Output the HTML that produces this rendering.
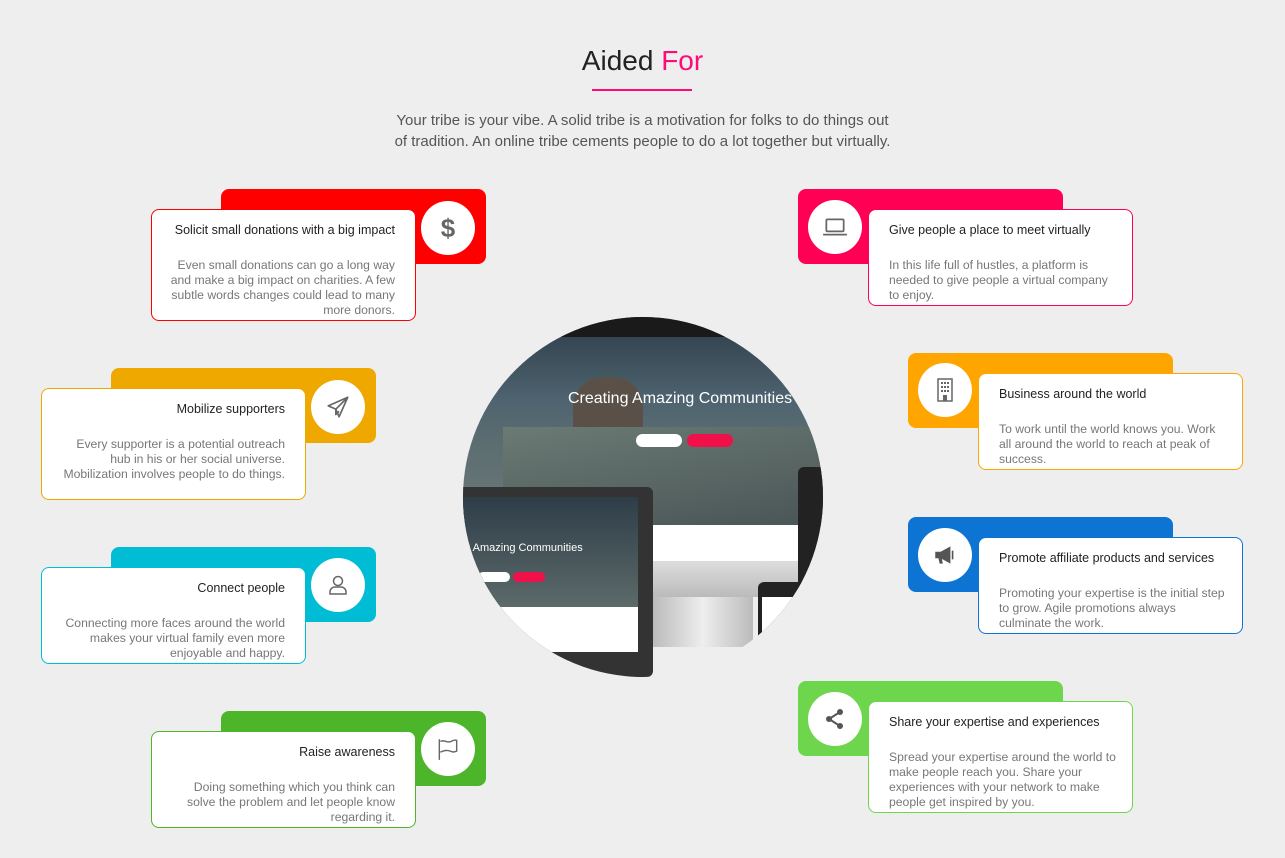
<!DOCTYPE html>
<html><head><meta charset="utf-8"><style>
body{margin:0;width:1285px;height:858px;background:#eeeeee;font-family:"Liberation Sans",Arial,sans-serif;position:relative;overflow:hidden}
.abs{position:absolute}
.bg{position:absolute;width:265px;height:75px;border-radius:8px}
.card{position:absolute;width:265px;background:#fff;border:1px solid;border-radius:8px;box-sizing:border-box;font-size:12.2px}
.card.l{padding:13px 20px 10px 12px;text-align:right}
.card.r{padding:13px 12px 10px 20px}
.card h4{margin:0 0 20px;font-weight:normal;color:#222;font-size:12.5px;line-height:15px}
.card p{margin:0;color:#777;line-height:15px}
.ic{position:absolute;width:54px;height:54px;border-radius:50%;background:#fff;display:flex;align-items:center;justify-content:center}
</style></head><body>
<div class="abs" style="left:0;width:1285px;top:45px;text-align:center;font-size:28px;color:#222">Aided <span style="color:#ff0a78">For</span></div>
<div class="abs" style="left:592px;top:89px;width:100px;height:2px;background:#ff0a78"></div>
<div class="abs" style="left:0;width:1285px;top:110px;text-align:center;font-size:15px;line-height:21px;color:#555">Your tribe is your vibe. A solid tribe is a motivation for folks to do things out<br>of tradition. An online tribe cements people to do a lot together but virtually.</div>

<div class="abs" style="left:463px;top:317px;width:360px;height:360px;border-radius:50%;overflow:hidden;background:#eee">
 <div class="abs" style="left:0;top:0;width:360px;height:210px;background:linear-gradient(180deg,#2d3c48 0%,#4e6470 40%,#5c6d70 60%,#6d7a7a 100%)"></div>
 <div class="abs" style="left:20px;top:0;width:340px;height:20px;background:#1a1a1a"></div>
 <div class="abs" style="left:110px;top:60px;width:70px;height:50px;background:#5a5048;border-radius:30px 30px 0 0"></div>
 <div class="abs" style="left:40px;top:110px;width:320px;height:100px;background:linear-gradient(170deg,#6a7a74,#4a5556)"></div>
 <div class="abs" style="left:105px;top:73px;color:#fff;font-size:16px;white-space:nowrap">Creating Amazing Communities</div>
 <div class="abs" style="left:173px;top:117px;width:46px;height:13px;border-radius:7px;background:#fff"></div>
 <div class="abs" style="left:224px;top:117px;width:46px;height:13px;border-radius:7px;background:#f0104a"></div>
 <div class="abs" style="left:180px;top:208px;width:170px;height:36px;background:#fff"></div>
 <div class="abs" style="left:180px;top:244px;width:160px;height:36px;background:linear-gradient(#ddd,#bbb)"></div>
 <div class="abs" style="left:190px;top:280px;width:100px;height:50px;background:linear-gradient(90deg,#bbb,#eee,#bbb)"></div>
 <div class="abs" style="left:-10px;top:170px;width:200px;height:190px;background:#333;border-radius:6px"></div>
 <div class="abs" style="left:-10px;top:180px;width:185px;height:110px;background:linear-gradient(180deg,#2e3d48,#5c6a6a)"></div>
 <div class="abs" style="left:-5px;top:225px;color:#fff;font-size:11px;white-space:nowrap">ng Amazing Communities</div>
 <div class="abs" style="left:15px;top:255px;width:32px;height:10px;border-radius:5px;background:#fff"></div>
 <div class="abs" style="left:50px;top:255px;width:32px;height:10px;border-radius:5px;background:#f0104a"></div>
 <div class="abs" style="left:-10px;top:290px;width:185px;height:45px;background:#fff"></div>
 <div class="abs" style="left:335px;top:150px;width:40px;height:140px;background:#222;border-radius:6px"></div>
 <div class="abs" style="left:295px;top:265px;width:50px;height:80px;background:#222;border-radius:6px"></div>
 <div class="abs" style="left:299px;top:280px;width:42px;height:60px;background:#fff"></div>
</div>

<div class="bg" style="left:221px;top:189px;background:#ff0000"></div>
<div class="ic" style="left:421px;top:201px"><span style="font-size:26px;font-weight:bold;color:#666">$</span></div>
<div class="card l" style="left:151px;top:209px;height:112px;border-color:#ff0000"><h4>Solicit small donations with a big impact</h4><p>Even small donations can go a long way and make a big impact on charities. A few subtle words changes could lead to many more donors.</p></div>

<div class="bg" style="left:111px;top:368px;background:#eea800"></div>
<div class="ic" style="left:311px;top:380px"><svg width="26" height="26" viewBox="0 0 24 24" fill="none" stroke="#666" stroke-width="1.5" stroke-linejoin="round"><path d="M21 3L3 11l7 3 3 7z M10 14l11-11 M10 14v5l3-3"/></svg></div>
<div class="card l" style="left:41px;top:388px;height:112px;border-color:#eea800"><h4>Mobilize supporters</h4><p>Every supporter is a potential outreach hub in his or her social universe. Mobilization involves people to do things.</p></div>

<div class="bg" style="left:111px;top:547px;background:#00bcd4"></div>
<div class="ic" style="left:311px;top:558px"><svg width="24" height="24" viewBox="0 0 24 24" fill="none" stroke="#666" stroke-width="1.5"><circle cx="12" cy="8" r="4.5"/><path d="M4 21v-2a5 5 0 0 1 5-5h6a5 5 0 0 1 5 5v2z"/></svg></div>
<div class="card l" style="left:41px;top:567px;height:97px;border-color:#00bcd4"><h4>Connect people</h4><p>Connecting more faces around the world makes your virtual family even more enjoyable and happy.</p></div>

<div class="bg" style="left:221px;top:711px;background:#4cb52a"></div>
<div class="ic" style="left:421px;top:722px"><svg width="26" height="26" viewBox="0 0 24 24" fill="none" stroke="#666" stroke-width="1.3"><path d="M4 3v19 M5 5c4-2 6 2 10 0s4-1 5-1v10c-2 1-4 1-6 0s-6-1-9 1"/></svg></div>
<div class="card l" style="left:151px;top:731px;height:97px;border-color:#4cb52a"><h4>Raise awareness</h4><p>Doing something which you think can solve the problem and let people know regarding it.</p></div>

<div class="bg" style="left:798px;top:189px;background:#ff0054"></div>
<div class="ic" style="left:808px;top:200px"><svg width="26" height="26" viewBox="0 0 24 24" fill="none" stroke="#666" stroke-width="1.6"><rect x="4" y="5" width="16" height="11" rx="1"/><path d="M1 19h22"/></svg></div>
<div class="card r" style="left:868px;top:209px;height:97px;border-color:#ff0054"><h4>Give people a place to meet virtually</h4><p>In this life full of hustles, a platform is needed to give people a virtual company to enjoy.</p></div>

<div class="bg" style="left:908px;top:353px;background:#ffa500"></div>
<div class="ic" style="left:918px;top:363px"><svg width="24" height="26" viewBox="0 0 24 26"><rect x="5" y="2" width="14" height="22" fill="none" stroke="#666" stroke-width="1.5"/><g fill="#666"><rect x="8" y="5" width="2" height="2"/><rect x="11" y="5" width="2" height="2"/><rect x="14" y="5" width="2" height="2"/><rect x="8" y="9" width="2" height="2"/><rect x="11" y="9" width="2" height="2"/><rect x="14" y="9" width="2" height="2"/><rect x="8" y="13" width="2" height="2"/><rect x="11" y="13" width="2" height="2"/><rect x="14" y="13" width="2" height="2"/><rect x="10" y="18" width="4" height="6"/></g></svg></div>
<div class="card r" style="left:978px;top:373px;height:97px;border-color:#ffa500"><h4>Business around the world</h4><p>To work until the world knows you. Work all around the world to reach at peak of success.</p></div>

<div class="bg" style="left:908px;top:517px;background:#0e74d4"></div>
<div class="ic" style="left:918px;top:528px"><svg width="26" height="26" viewBox="0 0 24 24" fill="#555"><path d="M3 9h5l9-5v16l-9-5H3z M6 15h3l1 5H7z"/><path d="M19 8v8" stroke="#555" stroke-width="1.5"/></svg></div>
<div class="card r" style="left:978px;top:537px;height:97px;border-color:#0e74d4"><h4>Promote affiliate products and services</h4><p>Promoting your expertise is the initial step to grow. Agile promotions always culminate the work.</p></div>

<div class="bg" style="left:798px;top:681px;background:#6dd64c"></div>
<div class="ic" style="left:808px;top:692px"><svg width="24" height="24" viewBox="0 0 24 24" fill="#555"><circle cx="17" cy="5" r="3"/><circle cx="6" cy="12" r="3"/><circle cx="17" cy="19" r="3"/><path d="M17 5L6 12l11 7" stroke="#555" stroke-width="2" fill="none"/></svg></div>
<div class="card r" style="left:868px;top:701px;height:112px;border-color:#6dd64c"><h4>Share your expertise and experiences</h4><p>Spread your expertise around the world to make people reach you. Share your experiences with your network to make people get inspired by you.</p></div>
</body></html>
